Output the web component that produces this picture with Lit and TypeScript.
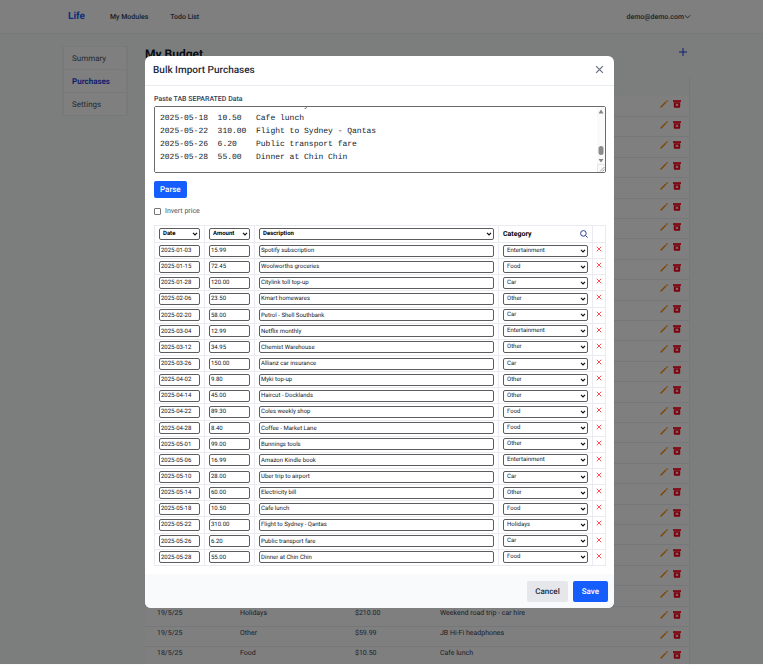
import { LitElement, html, css, svg } from "lit";
import { customElement, state, query } from "lit/decorators.js";

type Purchase = { date: string; amount: string; description: string; category: string };

const CATEGORIES = ["Entertainment", "Food", "Car", "Other", "Holidays"];

const IMPORTED: Purchase[] = [
  ["2025-01-03", "15.99", "Spotify subscription", "Entertainment"],
  ["2025-01-15", "72.45", "Woolworths groceries", "Food"],
  ["2025-01-28", "120.00", "Citylink toll top-up", "Car"],
  ["2025-02-06", "23.50", "Kmart homewares", "Other"],
  ["2025-02-20", "58.00", "Petrol - Shell Southbank", "Car"],
  ["2025-03-04", "12.99", "Netflix monthly", "Entertainment"],
  ["2025-03-12", "34.95", "Chemist Warehouse", "Other"],
  ["2025-03-26", "150.00", "Allianz car insurance", "Car"],
  ["2025-04-02", "9.80", "Myki top-up", "Other"],
  ["2025-04-14", "45.00", "Haircut - Docklands", "Other"],
  ["2025-04-22", "89.30", "Coles weekly shop", "Food"],
  ["2025-04-28", "8.40", "Coffee - Market Lane", "Food"],
  ["2025-05-01", "99.00", "Bunnings tools", "Other"],
  ["2025-05-06", "16.99", "Amazon Kindle book", "Entertainment"],
  ["2025-05-10", "28.00", "Uber trip to airport", "Car"],
  ["2025-05-14", "60.00", "Electricity bill", "Other"],
  ["2025-05-18", "10.50", "Cafe lunch", "Food"],
  ["2025-05-22", "310.00", "Flight to Sydney - Qantas", "Holidays"],
  ["2025-05-26", "6.20", "Public transport fare", "Car"],
  ["2025-05-28", "55.00", "Dinner at Chin Chin", "Food"],
].map(([date, amount, description, category]) => ({ date, amount, description, category }));

const LEDGER: string[][] = [
  ...Array.from({ length: 25 }, () => ["", "", "", ""]),
  ["19/5/25", "Holidays", "$210.00", "Weekend road trip - car hire"],
  ["19/5/25", "Other", "$59.99", "JB Hi-Fi headphones"],
  ["18/5/25", "Food", "$10.50", "Cafe lunch"],
];

const pencil = html`<svg class="pencil" viewBox="0 0 8 8" aria-hidden="true">${svg`
  <path d="M.6 7.4 5.9 2.1" fill="none" stroke="currentColor" stroke-width="1.4"/>
  <path d="M6.4 1.6 7.5.5" fill="none" stroke="currentColor" stroke-width="1.4"/>`}</svg>`;

const bin = html`<svg class="bin" viewBox="0 0 8 8" aria-hidden="true">${svg`
  <path d="M0 .2H8V1.9H0z" fill="currentColor"/>
  <path fill-rule="evenodd" d="M.8 2.3H7.2V6.8Q7.2 7.8 6.2 7.8H1.8Q.8 7.8.8 6.8zM3 3.4 2.5 3.9 3.4 4.8 2.5 5.7 3 6.2 4 5.3 5 6.2 5.5 5.7 4.6 4.8 5.5 3.9 5 3.4 4 4.3z" fill="currentColor"/>`}</svg>`;

const cross = html`<svg class="cross" viewBox="0 0 8 8" aria-hidden="true">
  <path d="M1 1 7 7M7 1 1 7" fill="none" stroke="currentColor" stroke-width="1.1" /></svg>`;

@customElement("app-root")
export class AppRoot extends LitElement {
  static styles = css`
    :host {
      display: block;
      position: relative;
      height: 100vh;
      overflow: hidden;
      background: #f8fbfa;
      color: #364153;
      font: 7px/10px Roboto, "Liberation Sans", sans-serif;
      text-rendering: geometricPrecision;
    }
    * { box-sizing: border-box; }
    button, input, select, textarea { font: inherit; color: inherit; margin: 0; text-rendering: inherit; }
    button { border: 0; padding: 0; background: none; cursor: pointer; }
    a { color: inherit; text-decoration: none; }
    h1, h2 { margin: 0; }
    table { border-collapse: collapse; width: 100%; table-layout: fixed; }
    svg { display: block; }

    .nav {
      display: flex;
      align-items: center;
      height: 34px;
      padding: 0 72px 0 68px;
      background: #fff;
      border-bottom: 1px solid #eceef1;
      font-weight: 500;
    }
    .brand { font-size: 10px; line-height: 16px; font-weight: 700; color: #155dfc; margin-right: 25px; }
    .nav .link { margin-right: 22px; }
    .account { display: flex; align-items: center; margin-left: auto; font-weight: 500; }
    .account svg { width: 7px; height: 7px; }

    .page { display: flex; gap: 17px; padding: 12px 73px 0 62px; align-items: flex-start; }
    .side {
      display: flex;
      flex-direction: column;
      flex: none;
      gap: 1px;
      width: 66px;
      padding: 0 1px;
      border: 1px solid #f0f3f3;
      background: #f0f3f3;
    }
    .side a { background: #fff; padding: 6px 8px 4px; font-size: 8px; line-height: 12px; color: #4a5565; }
    .side .current { color: #1d3ddb; font-weight: 700; }
    .main { flex: 1; min-width: 0; }
    .head { display: flex; justify-content: space-between; height: 30px; }
    .head h1 { font-size: 12px; line-height: 16px; font-weight: 700; color: #101828; }
    .add { width: 14px; height: 12px; color: #1d3ddb; }
    .add svg { width: 8px; height: 8px; margin: 0 auto; }
    .ledger { height: 592px; background: #fff; border-right: 1px solid #eef0f2; }
    .ledger th { background: #f8fbfa; height: 20px; padding: 0; }
    .ledger td { height: 20px; border-bottom: 1px solid #eceef1; padding: 1px 0 0 12px; vertical-align: top; white-space: nowrap; }
    .ledger .acts { padding: 4px 8px 0 0; }
    .actions { display: flex; justify-content: flex-end; gap: 5px; }
    .actions button { height: 8px; }
    .pencil, .bin { width: 8px; height: 8px; }
    .pencil { color: #ff8904; }
    .bin { color: #fb0018; }
    .l-date { width: 83px; }
    .l-cat { width: 115px; }
    .l-amount { width: 85px; }

    .overlay {
      position: absolute;
      inset: 0 0 1px 0;
      display: flex;
      justify-content: center;
      align-items: flex-start;
      padding: 56px 4px 0 0;
      background: rgba(0, 0, 0, 0.5);
    }
    .dialog { width: 469px; background: #fff; border-radius: 6px; overflow: hidden; }
    .title {
      display: flex;
      justify-content: space-between;
      align-items: center;
      height: 30px;
      padding: 0 10px 0 8px;
      border-bottom: 1px solid #e9ebf0;
    }
    .title h2 { font-size: 10px; line-height: 14px; font-weight: 500; color: #1e2939; }
    .title button { color: #6a7282; padding-bottom: 2px; }
    .title .cross { width: 9px; height: 9px; }
    .body { padding: 8px 8px 8px 9px; }
    .label { display: block; font-weight: 500; line-height: 10px; margin-bottom: 2px; }
    .paste-box { position: relative; }
    .paste {
      display: block;
      width: 100%;
      height: 67px;
      padding: 4px 14px 8px 5px;
      border: 1px solid #6b6b6b;
      border-radius: 2px;
      background: #fff;
      color: #101828;
      font: 8px/13px "Liberation Mono", monospace;
      tab-size: 4;
      overflow-y: scroll;
      resize: none;
      white-space: pre;
      outline: none;
    }
    .bar {
      position: absolute;
      inset: 1px 1px 1px auto;
      width: 8px;
      height: 65px;
      background: #fafafa;
      pointer-events: none;
    }
    .parse {
      display: block;
      margin-top: 8px;
      height: 17px;
      padding: 0 6px;
      border-radius: 2px;
      background: #155dfc;
      color: #fff;
      font-size: 8px;
      font-weight: 500;
    }
    .invert { display: flex; align-items: center; gap: 4px; margin: 8px 0 9px; color: #4a5565; }
    .invert input { appearance: none; width: 7px; height: 7px; border: 1px solid #767676; border-radius: 1px; background: #fff; }
    .invert input:checked { background: #155dfc; }

    .import { height: 341px; color: #101828; font-size: 6px; line-height: 8px; }
    .import th, .import td { border: 1px solid #e9ebf0; padding: 0 4px; }
    .import th { height: 17px; }
    .import td { height: 16px; }
    .import .del { padding: 0; }
    .import input, .import select {
      display: block;
      width: 100%;
      height: 12px;
      padding: 0 1px;
      border: 1px solid #5c5c5c;
      border-radius: 2px;
      background-color: #fff;
      line-height: 8px;
      outline: none;
    }
    .import select {
      appearance: none;
      padding: 0 9px 0 3px;
      background-image: url("data:image/svg+xml,%3Csvg xmlns='http://www.w3.org/2000/svg' viewBox='0 0 6 4'%3E%3Cpath d='M1 .8 3 2.8 5 .8' fill='none' stroke='%23101010' stroke-width='1.2'/%3E%3C/svg%3E");
      background-repeat: no-repeat;
      background-size: 6px 4px;
      background-position: right 1px center;
    }
    .import th select { font-weight: 700; color: #000; }
    .cat-head { display: flex; justify-content: space-between; align-items: center; font-size: 7px; font-weight: 700; color: #000; }
    .cat-head svg { width: 8px; height: 8px; color: #2b3f8f; }
    .del button { display: block; margin: 0 auto 3px; color: #fb2c36; }
    .del .cross { width: 6px; height: 6px; }
    .c-date, .c-amount { width: 50px; }
    .c-cat { width: 94px; }
    .c-del { width: 13px; }

    .foot { display: flex; justify-content: flex-end; gap: 5px; padding: 7px 6px 6px; background: #f9fafb; }
    .foot button { height: 21px; padding: 0 9px; border-radius: 2px; font-size: 8px; font-weight: 500; }
    .foot .cancel { background: #e5e7eb; color: #1e2939; padding: 0 8px; }
    .save { background: #155dfc; color: #fff; }
  `;

  @state() private rows = IMPORTED;
  @query(".paste") private paste!: HTMLTextAreaElement;

  firstUpdated() {
    this.paste.scrollTop = this.paste.scrollHeight;
  }

  private remove(row: Purchase) {
    this.rows = this.rows.filter((r) => r !== row);
  }

  private columnSelect(value: string) {
    return html`<select aria-label="Column type">
      ${["Date", "Amount", "Description"].map((o) => html`<option ?selected=${o === value}>${o}</option>`)}
    </select>`;
  }

  private renderRow(row: Purchase) {
    return html`<tr>
      <td><input aria-label="Date" .value=${row.date} /></td>
      <td><input aria-label="Amount" .value=${row.amount} /></td>
      <td><input aria-label="Description" .value=${row.description} /></td>
      <td>
        <select aria-label="Category">
          ${CATEGORIES.map((c) => html`<option ?selected=${c === row.category}>${c}</option>`)}
        </select>
      </td>
      <td class="del"><button aria-label="Remove row" @click=${() => this.remove(row)}>${cross}</button></td>
    </tr>`;
  }

  render() {
    const text = IMPORTED.map((r) => [r.date, r.amount, r.description].join("\t")).join("\n");
    return html`
      <nav class="nav">
        <a class="brand" href="#">Life</a>
        <a class="link" href="#">My Modules</a>
        <a class="link" href="#">Todo List</a>
        <button class="account">
          demo@demo.com
          <svg viewBox="0 0 6 6" aria-hidden="true"><path d="M.8 2 3 4.2 5.2 2" fill="none" stroke="currentColor" stroke-width=".8" /></svg>
        </button>
      </nav>
      <div class="page">
        <aside class="side">
          <a href="#">Summary</a>
          <a href="#" class="current">Purchases</a>
          <a href="#">Settings</a>
        </aside>
        <main class="main">
          <div class="head">
            <h1>My Budget</h1>
            <button class="add" aria-label="Add purchase">
              <svg viewBox="0 0 8 8"><path d="M4 0V8M0 4H8" stroke="currentColor" /></svg>
            </button>
          </div>
          <table class="ledger">
            <colgroup><col class="l-date" /><col class="l-cat" /><col class="l-amount" /><col /><col /></colgroup>
            <thead><tr><th></th><th></th><th></th><th></th><th></th></tr></thead>
            <tbody>
              ${LEDGER.map((cells) => html`<tr>
                ${cells.map((c) => html`<td>${c}</td>`)}
                <td class="acts"><div class="actions">
                  <button aria-label="Edit">${pencil}</button><button aria-label="Delete">${bin}</button>
                </div></td>
              </tr>`)}
            </tbody>
          </table>
        </main>
      </div>
      <div class="overlay">
        <div class="dialog" role="dialog" aria-labelledby="dialog-title">
          <header class="title">
            <h2 id="dialog-title">Bulk Import Purchases</h2>
            <button aria-label="Close">${cross}</button>
          </header>
          <div class="body">
            <label class="label" for="paste">Paste TAB SEPARATED Data</label>
            <div class="paste-box">
              <textarea class="paste" id="paste" spellcheck="false" .value=${text}></textarea>
              <svg class="bar" viewBox="0 0 8 65" aria-hidden="true">
                <path d="M4 2.5 6.5 6.5H1.5zM4 55.5 6.5 52H1.5z" fill="#858585" />
                <rect x="1.5" y="39" width="5" height="9" rx="2.5" fill="#8b8b8b" />
                <path d="M.5 65V57.5H8" fill="none" stroke="#e4e4e4" />
                <path d="M3 64.5 7.5 60M5.5 64.5 7.5 62.5" fill="none" stroke="#777" stroke-width=".7" />
              </svg>
            </div>
            <button class="parse">Parse</button>
            <label class="invert"><input type="checkbox" />Invert price</label>
            <table class="import">
              <colgroup><col class="c-date" /><col class="c-amount" /><col /><col class="c-cat" /><col class="c-del" /></colgroup>
              <thead><tr>
                <th>${this.columnSelect("Date")}</th>
                <th>${this.columnSelect("Amount")}</th>
                <th>${this.columnSelect("Description")}</th>
                <th><div class="cat-head">Category
                  <button aria-label="Search categories"><svg viewBox="0 0 8 8"><path d="M5.5 5.5 7.6 7.6M6.2 3.4A2.8 2.8 0 1 1 .6 3.4 2.8 2.8 0 0 1 6.2 3.4z" fill="none" stroke="currentColor" /></svg></button>
                </div></th>
                <th class="del"></th>
              </tr></thead>
              <tbody>${this.rows.map((r) => this.renderRow(r))}</tbody>
            </table>
          </div>
          <footer class="foot">
            <button class="cancel">Cancel</button>
            <button class="save">Save</button>
          </footer>
        </div>
      </div>
    `;
  }
}
